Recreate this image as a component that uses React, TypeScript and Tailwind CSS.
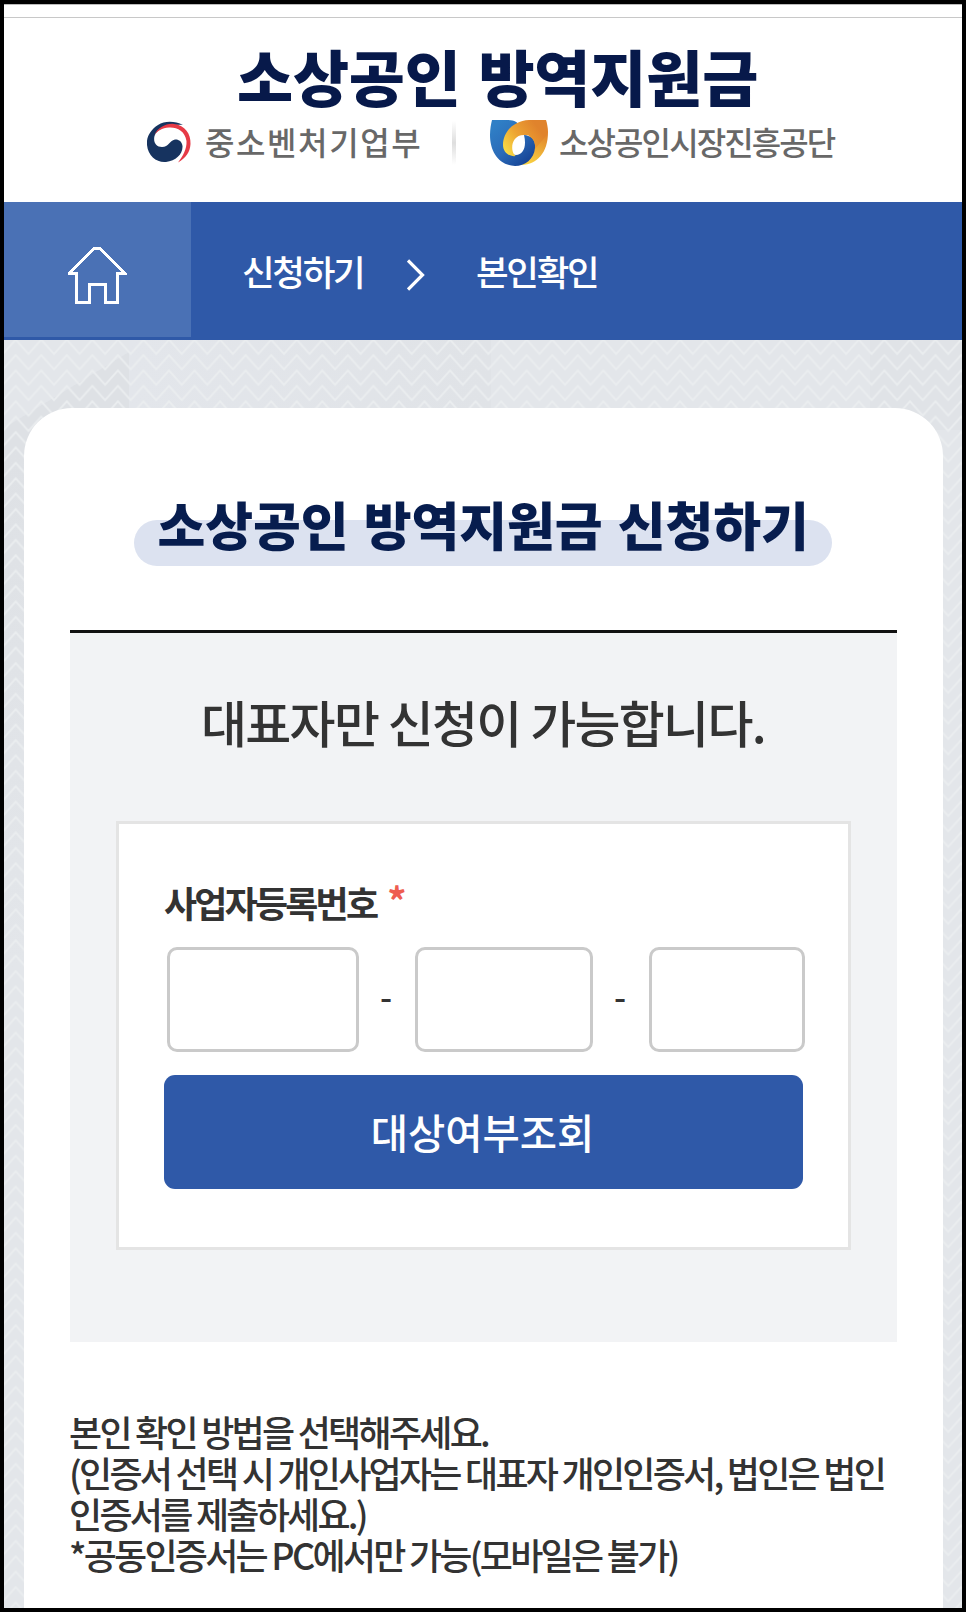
import type { ReactNode } from "react";

const MinistryLogo = () => (
  <svg className="h-[44px] w-[46px]" viewBox="0 0 46 44" fill="none">
    <path
      d="M36 4C28 0 18 -.5 11 4C3 9 -1 17 0 24C1 35 10 42 19 41C29 40 36 33 35.500 25C35 20 31 18 28 18.500C22 20 22 26 15 26C9 26 6 21 7.500 15C10 8 20 3 36 4Z"
      fill="#16335f"
    />
    <path
      d="M7.500 14C11 6 20 2 27 3C38 4 44 13 43.500 23C43 31 39 37 31 41.500C36 35 40 28 39.500 20C38 10 30 6 22 6.500C15 7 10 10 7.500 14Z"
      fill="#e63a46"
    />
  </svg>
);

const AgencyLogo = () => (
  <svg className="h-[46px] w-[58px]" viewBox="0 0 58 46" fill="none">
    <defs>
      <linearGradient id="blue" x1="6" y1="4" x2="40" y2="44" gradientUnits="userSpaceOnUse">
        <stop stopColor="#2f7fc6" />
        <stop offset=".5" stopColor="#2b6bb8" />
        <stop offset="1" stopColor="#143f92" />
      </linearGradient>
      <linearGradient id="orange" x1="48" y1="8" x2="15" y2="32" gradientUnits="userSpaceOnUse">
        <stop stopColor="#e0832c" />
        <stop offset=".5" stopColor="#eda332" />
        <stop offset="1" stopColor="#f9dc45" />
      </linearGradient>
      <linearGradient id="yellow" x1="52" y1="12" x2="36" y2="46" gradientUnits="userSpaceOnUse">
        <stop stopColor="#e0832c" />
        <stop offset="1" stopColor="#fbd843" />
      </linearGradient>
    </defs>
    <path d="M32 45C47 44 58 33 58 12C58 8 57 3 56 0L36 8L44 28Z" fill="url(#yellow)" />
    <path
      d="M2 0H18C25 0 28 3 29 5L20 14C15 22 18 34 26 35C33 35 37 27 34 15C41 15 46 21 45 28C44 39 35 46 25 46C8 45 0 31 0 15C0 9 1 4 2 0Z"
      fill="url(#blue)"
    />
    <path
      d="M56 0H39C23 1 13 12 13 25C13 32 19 37 26 36C20 33 20 15 34 15C42 14 46 22 45 29L56 16Z"
      fill="url(#orange)"
    />
    <ellipse cx="29" cy="25" rx="5" ry="7" fill="#fff" />
  </svg>
);

const HomeIcon = () => (
  <svg className="h-[58px] w-[60px]" viewBox="0 0 60 58" fill="none" shapeRendering="crispEdges">
    <path d="M1 27.500H9.500V56H22V38H38V56H50.500V27.500H58L32.500 2H27.500L2 27.500" stroke="#fff" strokeWidth="3" />
  </svg>
);

const Chevron = () => (
  <svg className="h-[32px] w-[18px]" viewBox="0 0 18 32" fill="none">
    <path d="M1 1.500L15.500 16L1 30.500" stroke="#fff" strokeWidth="3.200" />
  </svg>
);

/* 지그재그 배경 */
const ZigzagBackground = () => (
  <svg className="absolute inset-0 h-full w-full" fill="none">
    <defs>
      <pattern id="zigzag" x="11.700" y="11" width="25.550" height="15.400" patternUnits="userSpaceOnUse">
        <path d="M-12.775 18.400L0 4L12.775 18.400L25.550 4L38.325 18.400" stroke="#eaedef" strokeWidth="1.900" />
        <path d="M-12.775 3L0 -11.400L12.775 3L25.550 -11.400L38.325 3" stroke="#eaedef" strokeWidth="1.900" />
      </pattern>
      <linearGradient id="fold" x1="0" x2="1">
        <stop stopColor="#e3e6eb" />
        <stop offset="1" stopColor="#e0e3e7" />
      </linearGradient>
      <linearGradient id="edge" x1="0" y1="0" x2="0" y2="1">
        <stop stopColor="#dee1e5" />
        <stop offset="1" stopColor="#e3e6ea" />
      </linearGradient>
    </defs>
    <rect width="100%" height="100%" fill="#e3e6ea" />
    <path d="M125 12V110H0V88Z" fill="#dee1e5" />
    <rect y="110" width="80" height="520" fill="url(#edge)" />
    <rect x="125" width="362" height="90" fill="url(#fold)" />
    <rect x="866" width="100" height="90" fill="#e0e3e7" />
    <rect width="100%" height="100%" fill="url(#zigzag)" />
  </svg>
);

interface InputProps {
  label: string;
  className: string;
}

const NumberInput = ({ label, className }: InputProps) => (
  <input
    aria-label={label}
    className={`h-[105px] rounded-[10px] border-[3px] border-[#cacaca] bg-white ${className}`}
  />
);

const Dash = () => <span className="w-[56px] pb-[8px] pr-[2px] text-center">-</span>;

const Line = ({ children }: { children: ReactNode }) => (
  <span className="block whitespace-nowrap">{children}</span>
);

const App = () => {
  return (
    <div className="h-[1612px] w-[966px] overflow-hidden border-4 border-black bg-white font-['Noto_Sans_CJK_KR',sans-serif] text-[#333]">
      <header className="h-[198px] border-t border-[#bbb]">
        <div className="h-[13px] border-b border-[#c8c8c8]" />
        <h1 className="mt-[23px] h-[70px] whitespace-nowrap pl-[233px] text-[61px] font-black leading-[70px] tracking-[-0.2px] text-[#07194a] [word-spacing:4px]">
          소상공인 방역지원금
        </h1>
        <div className="mt-[7px] flex h-[50px] items-center pl-[143px] text-[32px] font-medium text-[#686868]">
          <MinistryLogo />
          <span className="ml-[12px] w-[218px] whitespace-nowrap pb-[5px] tracking-[1.6px]">중소벤처기업부</span>
          <span className="ml-[29px] h-[44px] w-[4px] bg-linear-to-b from-white via-[#dedede] to-white" />
          <span className="ml-[34px]">
            <AgencyLogo />
          </span>
          <span className="ml-[11px] whitespace-nowrap pb-[5px] tracking-[-1.9px]">소상공인시장진흥공단</span>
        </div>
      </header>

      <nav className="flex h-[138px] bg-[#2f59a8] text-[35.500px] font-medium leading-[137px] tracking-[-2.300px] text-white">
        <div className="flex h-[135px] w-[187px] items-center justify-center bg-[#4a71b5] pr-[2px] pt-[11px]">
          <HomeIcon />
        </div>
        <span className="ml-[51px] w-[123px] whitespace-nowrap">신청하기</span>
        <span className="ml-[42px] flex items-center pt-[8px]">
          <Chevron />
        </span>
        <span className="ml-[51px] whitespace-nowrap">본인확인</span>
      </nav>

      <main className="relative h-[1268px] pl-[20px] pr-[19px] pt-[68px]">
        <ZigzagBackground />
        <section className="relative h-[1200px] rounded-t-[48px] bg-white px-[46px] pt-[83px]">
          <div className="relative ml-[63.500px] h-[75px] w-[698.500px]">
            <div className="absolute inset-x-0 bottom-0 h-[46px] rounded-full bg-[#dce2f0]" />
            <h2 className="relative whitespace-nowrap pl-[24px] text-[52px] font-black leading-[66px] tracking-[-0.100px] text-[#071d4e] [word-spacing:3.500px]">
              소상공인 방역지원금 신청하기
            </h2>
          </div>

          <div className="mt-[64px] h-[712px] border-t-[3px] border-[#111] bg-[#f2f3f5] px-[46px]">
            <p className="mt-[53px] h-[70px] whitespace-nowrap pl-[85px] text-[50px] font-medium leading-[70px] tracking-[-1.700px]">
              대표자만 신청이 가능합니다.
            </p>
            <form className="mt-[65px] h-[429px] border-[3px] border-[#e4e4e4] bg-white pl-[45px] pt-[53px]">
              <label className="flex h-[50px] text-[36px] font-bold leading-[50px] tracking-[-2.800px]">
                사업자등록번호
                <span className="ml-[11px] text-[38px] leading-[46px] text-[#ee5d50]">*</span>
              </label>
              <div className="mt-[20px] flex items-center pl-[3px] text-[34px] font-medium">
                <NumberInput label="사업자등록번호 앞자리" className="w-[192px]" />
                <Dash />
                <NumberInput label="사업자등록번호 가운데" className="w-[178px]" />
                <Dash />
                <NumberInput label="사업자등록번호 뒷자리" className="w-[156px]" />
              </div>
              <button
                type="button"
                className="mt-[23px] h-[114px] w-[639px] rounded-[11px] bg-[#2f59a8] pr-[8px] pt-[1px] pl-[6px] text-[40.500px] font-medium text-white"
              >
                대상여부조회
              </button>
            </form>
          </div>

          <p className="-ml-px mt-[69px] text-[36px] font-medium leading-[41px] tracking-[-2.740px]">
            <Line>본인 확인 방법을 선택해주세요.</Line>
            <Line>(인증서 선택 시 개인사업자는 대표자 개인인증서, 법인은 법인</Line>
            <Line>인증서를 제출하세요.)</Line>
            <Line>*공동인증서는 PC에서만 가능(모바일은 불가)</Line>
          </p>
        </section>
      </main>
    </div>
  );
};

export default App;
